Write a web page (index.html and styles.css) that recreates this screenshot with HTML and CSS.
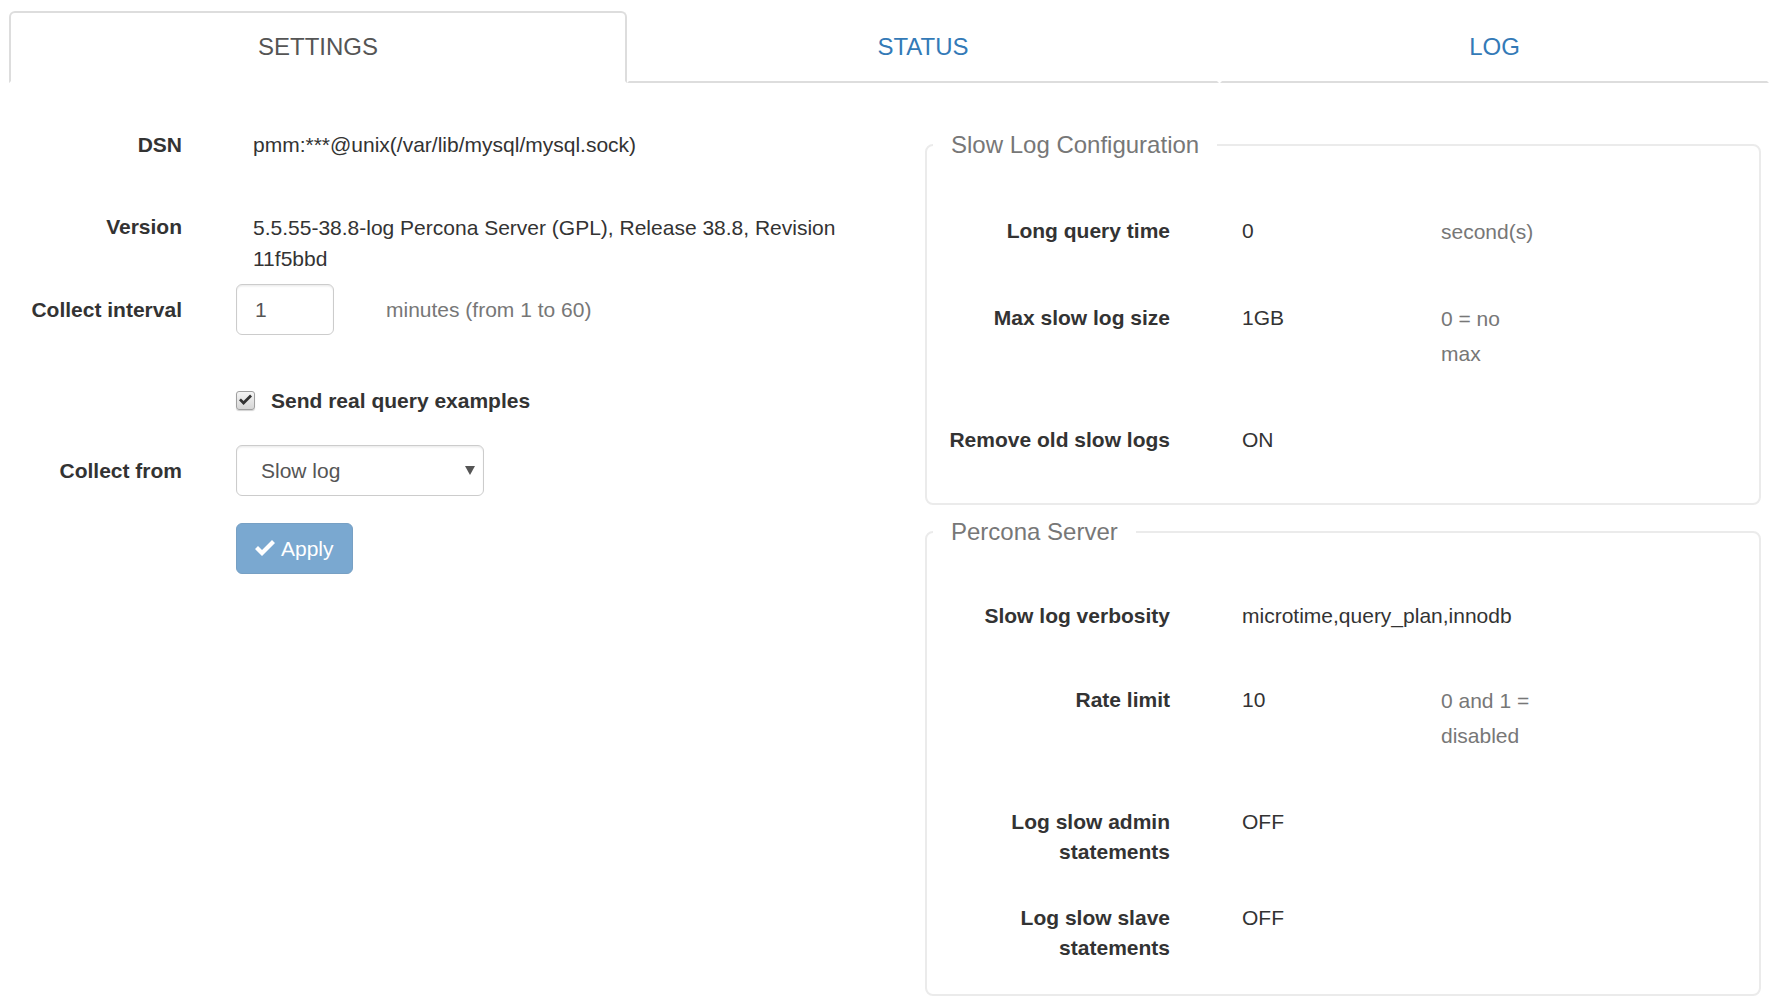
FILE: index.html
```html
<!DOCTYPE html>
<html lang="en">
<head>
<meta charset="utf-8">
<title>Settings</title>
<link rel="stylesheet" href="styles.css">
</head>
<body>
<ul class="tabs">
  <li class="tab active"><a>SETTINGS</a></li>
  <li class="tab"><a href="#">STATUS</a></li>
  <li class="tab tab-log"><a href="#">LOG</a></li>
</ul>

<div class="main">
  <form class="settings">
    <div class="row row-dsn">
      <div class="label">DSN</div>
      <div class="static">pmm:***@unix(/var/lib/mysql/mysql.sock)</div>
    </div>
    <div class="row row-version">
      <div class="label">Version</div>
      <div class="static static-wrap">5.5.55-38.8-log Percona Server (GPL), Release 38.8, Revision 11f5bbd</div>
    </div>
    <div class="row row-interval">
      <div class="label">Collect interval</div>
      <input class="input" type="text" value="1">
      <div class="unit">minutes (from 1 to 60)</div>
    </div>
    <div class="row row-check">
      <span class="checkbox">
        <svg viewBox="0 0 20 17" width="13" height="12"><polygon points="0,9 3,6 7,10 17,0 20,3 7,16" fill="#333"/></svg>
      </span>
      <span class="check-label">Send real query examples</span>
    </div>
    <div class="row row-from">
      <div class="label">Collect from</div>
      <div class="select-wrap">
        <select class="select"><option>Slow log</option></select>
        <span class="caret"></span>
      </div>
    </div>
    <div class="row row-apply">
      <button type="button" class="btn">
        <svg viewBox="0 0 20 17" width="20" height="17"><polygon points="0,9 3,6 7,10 17,0 20,3 7,16" fill="#fff"/></svg>
        <span>Apply</span>
      </button>
    </div>
  </form>

  <div class="info">
    <fieldset class="group group-slow">
      <legend>Slow Log Configuration</legend>
      <div class="frow">
        <div class="flabel">Long query time</div>
        <div class="fval">0</div>
        <div class="fhint">second(s)</div>
      </div>
      <div class="frow">
        <div class="flabel">Max slow log size</div>
        <div class="fval">1GB</div>
        <div class="fhint">0 = no max</div>
      </div>
      <div class="frow">
        <div class="flabel">Remove old slow logs</div>
        <div class="fval">ON</div>
      </div>
    </fieldset>

    <fieldset class="group group-server">
      <legend>Percona Server</legend>
      <div class="frow">
        <div class="flabel">Slow log verbosity</div>
        <div class="fval">microtime,query_plan,innodb</div>
      </div>
      <div class="frow">
        <div class="flabel">Rate limit</div>
        <div class="fval">10</div>
        <div class="fhint">0 and 1 = disabled</div>
      </div>
      <div class="frow frow-tight">
        <div class="flabel">Log slow admin statements</div>
        <div class="fval">OFF</div>
      </div>
      <div class="frow">
        <div class="flabel">Log slow slave statements</div>
        <div class="fval">OFF</div>
      </div>
    </fieldset>
  </div>
</div>
</body>
</html>
```

FILE: styles.css
```css
* {
  box-sizing: border-box;
}

html,
body {
  margin: 0;
  background: #fff;
}

body {
  padding: 0 5px 0 9px;
  font-family: "Liberation Sans", Arial, Helvetica, sans-serif;
  font-size: 21px;
  line-height: 30px;
  color: #333;
}

/* ---------- tabs ---------- */
.tabs {
  list-style: none;
  margin: 11px 0 0;
  padding: 0;
  display: grid;
  grid-template-columns: 618px 592px 1fr;
}

.tab a {
  display: block;
  text-align: center;
  font-size: 24px;
  line-height: 34px;
  padding: 17px 0 17px;
  border: 2px solid transparent;
  border-bottom-color: #ddd;
  color: #337ab7;
  text-decoration: none;
}

.tab.active a {
  border-color: #ddd #ddd transparent #ddd;
  border-radius: 6px 6px 0 0;
  color: #555;
}

.tab-log {
  margin-left: 1px;
}

/* ---------- layout ---------- */
.main {
  display: flex;
  align-items: flex-start;
}

.settings {
  width: 916px;
  flex-shrink: 0;
  margin: 0;
  padding-top: 47px;
}

.info {
  width: 836px;
  flex-shrink: 0;
}

/* ---------- left form ---------- */
.row {
  display: flex;
  align-items: center;
}

.label {
  width: 173px;
  flex-shrink: 0;
  text-align: right;
  font-weight: bold;
}

.static {
  margin-left: 71px;
}

.static-wrap {
  width: 630px;
  line-height: 31px;
}

.row-dsn {
  align-items: flex-start;
  margin-bottom: 52px;
}

.row-version {
  align-items: flex-start;
  margin-bottom: 10px;
}

.row-interval {
  margin-bottom: 51px;
}

.input {
  margin-left: 54px;
  width: 98px;
  height: 51px;
  padding: 0 18px;
  border: 1.5px solid #ccc;
  border-radius: 6px;
  box-shadow: inset 0 1.5px 1.5px rgba(0, 0, 0, 0.075);
  font: inherit;
  color: #555;
  background: #fff;
}

.unit {
  margin-left: 52px;
  color: #777;
}

.row-check {
  padding-left: 227px;
  margin-bottom: 29px;
}

.checkbox {
  width: 19px;
  height: 19px;
  margin-top: -2px;
  border: 1.5px solid #a0a0a0;
  border-radius: 3px;
  background: linear-gradient(#f5f5f5, #d6d6d6);
  display: flex;
  align-items: center;
  justify-content: center;
  box-shadow: 0 1px 1px rgba(0, 0, 0, 0.18);
}

.check-label {
  margin-left: 16px;
  font-weight: bold;
}

.row-from {
  margin-bottom: 27px;
}

.select-wrap {
  position: relative;
  margin-left: 54px;
}

.select {
  display: block;
  width: 248px;
  height: 51px;
  padding: 0 24px;
  border: 1.5px solid #ccc;
  border-radius: 6px;
  box-shadow: inset 0 1.5px 1.5px rgba(0, 0, 0, 0.075);
  background: #fff;
  font: inherit;
  color: #555;
  appearance: none;
  -webkit-appearance: none;
}

.caret {
  position: absolute;
  right: 9px;
  top: 21px;
  width: 0;
  height: 0;
  border-left: 5px solid transparent;
  border-right: 5px solid transparent;
  border-top: 9px solid #555;
}

.row-apply {
  padding-left: 227px;
}

.btn {
  display: inline-flex;
  align-items: center;
  gap: 6px;
  height: 51px;
  padding: 0 18px;
  border: 1.5px solid #77a0c4;
  border-radius: 6px;
  background: #7aa8d0;
  color: #fff;
  font: inherit;
}

.btn svg {
  margin-top: -1px;
}

/* ---------- right fieldsets ---------- */
.group {
  margin: 45px 0 0;
  padding: 54px 6px 48px;
  border: 2px solid #ebebeb;
  border-radius: 8px;
  min-width: 0;
}

.group-server {
  margin-top: 10px;
  padding-top: 52px;
  padding-bottom: 31px;
}

.group legend {
  font-size: 24px;
  line-height: 34px;
  color: #777;
  padding: 0 18px;
  margin: 0;
}

.frow {
  display: flex;
  align-items: flex-start;
  margin-bottom: 54px;
}

.frow:last-child {
  margin-bottom: 0;
}

.frow-tight {
  margin-bottom: 36px;
}

.flabel {
  width: 237px;
  flex-shrink: 0;
  text-align: right;
  font-weight: bold;
}

.fval {
  width: 199px;
  margin-left: 72px;
  flex-shrink: 0;
  white-space: nowrap;
}

.fhint {
  width: 98px;
  flex-shrink: 0;
  line-height: 35px;
  margin-top: -2px;
  color: #777;
}
```
